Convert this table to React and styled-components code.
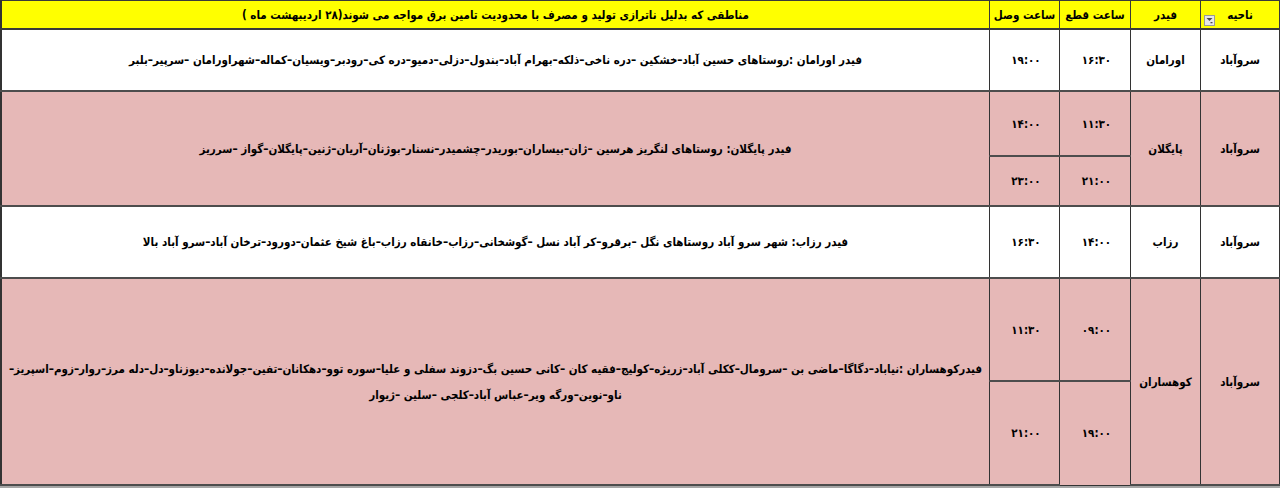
import React from 'react';
import styled, { createGlobalStyle } from 'styled-components';

const GlobalStyle = createGlobalStyle`
  html, body {
    margin: 0;
    padding: 0;
    background: #ffffff;
  }
  body {
    font-family: "DejaVu Sans Condensed", "DejaVu Sans", sans-serif;
  }
`;

const Page = styled.div`
  width: 1280px;
  height: 488px;
  overflow: hidden;
  background: #a6a6a6;
`;

const Table = styled.table`
  width: 1280px;
  table-layout: fixed;
  border-collapse: collapse;
  direction: rtl;
  font-weight: bold;
  font-size: 11.5px;
  color: #000;
  border-left: 2px solid #333;
`;

const HeadCell = styled.th`
  position: relative;
  height: 27px;
  padding: 0;
  background: #ffff00;
  border: 1px solid #3a3a3a;
  border-bottom: 2px solid #3a3a3a;
  font-weight: bold;
  text-align: center;
  vertical-align: middle;
`;

const FilterButton = styled.span`
  position: absolute;
  left: 3px;
  bottom: 2px;
  width: 9px;
  height: 9px;
  background: #e6e6e6;
  border: 1px solid #9a9a9a;
  display: flex;
  align-items: center;
  justify-content: center;
`;

const Row = styled.tr`
  height: ${(p) => p.$h}px;
  background: ${(p) => (p.$pink ? '#e6b8b7' : '#ffffff')};
`;

const Cell = styled.td`
  padding: 0 3px;
  border-left: 1px solid #333;
  border-right: 1px solid #333;
  border-top: ${(p) => (p.$split ? '1px solid #333' : '2px solid #4d4d4d')};
  border-bottom: ${(p) => (p.$split ? '1px solid #333' : '2px solid #4d4d4d')};
  text-align: center;
  vertical-align: middle;
  line-height: 26px;
`;

const TimeCell = styled(Cell)`
  padding-left: 6px;
`;

function Filter() {
  return (
    <FilterButton>
      <svg width="7" height="7" viewBox="0 0 7 7">
        <path d="M0.5 1h6L3.5 4z" fill="#4a4a4a" />
        <rect x="4.5" y="5" width="2" height="1.3" fill="#4a4a4a" />
      </svg>
    </FilterButton>
  );
}

const rows = [
  {
    region: 'سروآباد',
    feeder: 'اورامان',
    h: [62],
    times: [['۱۶:۳۰', '۱۹:۰۰']],
    text: 'فیدر اورامان :روستاهای حسین  آباد–خشکین –دره ناخی–ذلکه–بهرام آباد–بندول–دزلی–دمیو–دره کی–رودبر–ویسیان–کماله–شهراورامان –سرپیر–بلبر',
  },
  {
    region: 'سروآباد',
    feeder: 'پایگلان',
    pink: true,
    h: [65, 50],
    times: [['۱۱:۳۰', '۱۴:۰۰'], ['۲۱:۰۰', '۲۳:۰۰']],
    text: 'فیدر پایگلان: روستاهای لنگریز هرسین –ژان–بیساران–بوریدر–چشمیدر–نسنار–بوژنان–آریان–ژنین–پایگلان–گواز –سرریز',
  },
  {
    region: 'سروآباد',
    feeder: 'رزاب',
    h: [72],
    times: [['۱۴:۰۰', '۱۶:۳۰']],
    text: 'فیدر رزاب: شهر سرو آباد روستاهای نگل –برقرو–کر آباد نسل –گوشخانی–رزاب–خانقاه رزاب–باغ شیخ عثمان–دورود–ترخان آباد–سرو آباد بالا',
  },
  {
    region: 'سروآباد',
    feeder: 'کوهساران',
    pink: true,
    h: [103, 104],
    times: [['۰۹:۰۰', '۱۱:۳۰'], ['۱۹:۰۰', '۲۱:۰۰']],
    text: 'فیدرکوهساران :نیاباد–دگاگا–ماضی بن –سرومال–ککلی آباد–زریژه–کولیج–فقیه کان –کانی حسین بگ–دزوند سفلی و علیا–سوره توو–دهکانان–تفین–جولانده–دیوزناو–دل–دله مرز–روار–زوم–اسپریز–ناو–نوین–ورگه ویر–عباس آباد–کلجی –سلین –ژیوار',
  },
];

const App = () => {
  return (
    <Page>
      <GlobalStyle />
      <Table>
        <colgroup>
          <col style={{ width: 79 }} />
          <col style={{ width: 70 }} />
          <col style={{ width: 71 }} />
          <col style={{ width: 70 }} />
          <col />
        </colgroup>
        <thead>
          <tr>
            <HeadCell>
              ناحیه
              <Filter />
            </HeadCell>
            <HeadCell>فیدر</HeadCell>
            <HeadCell>ساعت قطع</HeadCell>
            <HeadCell>ساعت وصل</HeadCell>
            <HeadCell>مناطقی که بدلیل ناترازی تولید و مصرف با محدودیت تامین برق مواجه می شوند(۲۸ اردیبهشت ماه )</HeadCell>
          </tr>
        </thead>
        <tbody>
          {rows.map((r, i) =>
            r.h.map((h, j) => (
              <Row key={`${i}-${j}`} $h={h} $pink={r.pink}>
                {j === 0 && (
                  <>
                    <Cell rowSpan={r.h.length}>{r.region}</Cell>
                    <Cell rowSpan={r.h.length}>{r.feeder}</Cell>
                  </>
                )}
                <TimeCell $split={r.h.length > 1 && j === 1}>{r.times[j][0]}</TimeCell>
                <TimeCell $split={r.h.length > 1 && j === 0}>{r.times[j][1]}</TimeCell>
                {j === 0 && <Cell rowSpan={r.h.length}>{r.text}</Cell>}
              </Row>
            ))
          )}
        </tbody>
      </Table>
    </Page>
  );
};

export default App;
